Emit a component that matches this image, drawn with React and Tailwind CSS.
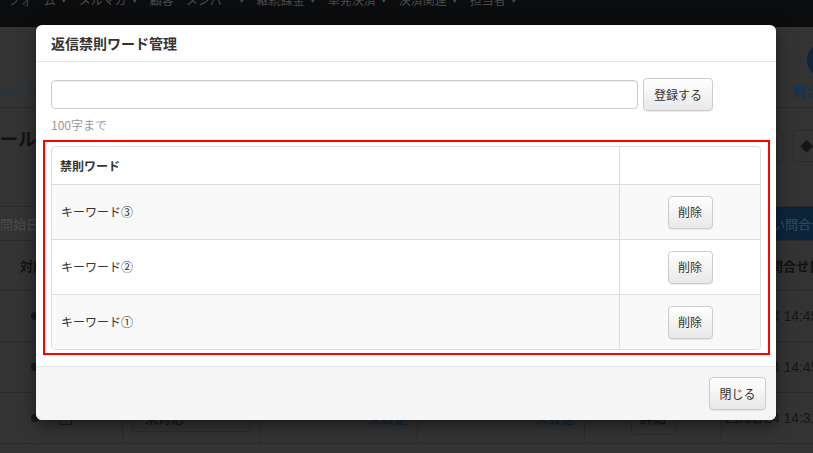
import React from "react";

const navItems = ["フォーム", "メルマガ", "顧客", "メンバー", "継続課金", "単発決済", "決済関連", "担当者"];
const keywords = ["キーワード③", "キーワード②", "キーワード①"];

// Gray bootstrap-ish button
function Btn({ children, className = "" }) {
  return (
    <button
      className={
        "h-[33px] rounded-[4px] border border-[#ccc] bg-linear-to-b from-white to-[#e8e8e8] text-[12px] text-[#333] shadow-[0_1px_1px_rgba(0,0,0,0.075)] " +
        className
      }
    >
      {children}
    </button>
  );
}

// The page sitting behind the backdrop, drawn already dimmed
function Background() {
  return (
    <div className="flex h-full flex-col text-[#121212]">
      <nav className="flex h-[27px] items-start gap-[12px] overflow-hidden bg-[#0b0c0e] pl-[8px] text-[12px] leading-none text-[#4a4a4a]">
        {navItems.map((n, i) => (
          <span key={n} className="-mt-[6px] flex items-center gap-[5px]">
            {n}
            {i !== 2 && <span className="text-[6px]">▼</span>}
          </span>
        ))}
      </nav>

      <div className="flex h-[81px] justify-between border-b border-[#2b2b2b]">
        <span className="mt-[52px] text-[13px] text-[#1b3650]">メール配信</span>
        <div className="flex w-[20px] flex-col overflow-hidden">
          <div className="ml-[14px] mt-[16px] h-[34px] w-[34px] shrink-0 rounded-full bg-[#0e253a]" />
          <span className="mt-[4px] whitespace-nowrap text-[13px] font-bold text-[#17324b]">問合せ</span>
        </div>
      </div>

      <div className="flex h-[98px] justify-between">
        <span className="mt-[17px] text-[18px] font-bold">ールフォーム管理</span>
        <div className="mt-[22px] flex gap-[10px]">
          <span className="flex h-[32px] w-[36px] items-center justify-end rounded-[4px] border border-[#2c2c2c] pr-[10px] text-[13px] text-[#151515]">理</span>
          <span className="flex h-[32px] w-[20px] items-center overflow-hidden rounded-l-[4px] border border-r-0 border-[#2c2c2c] pl-[6px] text-[13px] font-bold text-[#151515]">◆</span>
        </div>
      </div>

      <div className="flex h-[35px] items-center justify-between border-y border-[#2b2b2b]">
        <span className="text-[13px] text-[#4a4a4a]">開始日</span>
        <span className="flex h-[33px] w-[43px] items-center overflow-hidden whitespace-nowrap rounded-l-[4px] bg-[#0c243a] pl-[2px] text-[13px] text-[#3a4a5a]">い問合せ</span>
      </div>

      <div className="flex h-[50px] items-center justify-between border-b border-[#2b2b2b] text-[13px] font-bold">
        <span className="pl-[20px]">対応</span>
        <span className="w-[43px] overflow-hidden whitespace-nowrap">問合せ日時</span>
      </div>

      {[0, 1, 2].map((r) => (
        <div key={r} className="grid h-[51px] grid-cols-[123px_138px_157px_167px_137px_1fr] border-b border-[#2b2b2b] text-[13px]">
          <div className="flex items-center gap-[20px] border-r border-[#2b2b2b] pl-[31px]">
            <span className="h-[8px] w-[8px] rounded-full bg-[#1a1a1a]" />
            <span className="h-[13px] w-[13px] rounded-[2px] border border-[#1c1c1c]" />
          </div>
          <div className="flex items-center border-r border-[#2b2b2b] pl-[9px]">
            <span className="flex h-[28px] w-[119px] items-center rounded-[4px] border border-[#2c2c2c] pl-[12px]">未対応</span>
          </div>
          <div className="flex items-center justify-end border-r border-[#2b2b2b] pr-[10px] text-[#0f2538]">未設定</div>
          <div className="flex items-center justify-end border-r border-[#2b2b2b] pr-[10px] text-[#0f2538]">未設定</div>
          <div className="flex items-center justify-center border-r border-[#2b2b2b]">
            <span className="flex h-[34px] w-[45px] items-center justify-center rounded-[4px] border border-[#2c2c2c]">詳細</span>
          </div>
          <div className="flex items-center whitespace-nowrap pl-[3px] font-['Liberation_Sans',sans-serif] text-[14px] text-[#161616]">
            {r === 2 ? "21/02/24 14:31" : "21/02/24 14:45"}
          </div>
        </div>
      ))}
    </div>
  );
}

export default function App() {
  return (
    <div className="relative h-[453px] w-[813px] overflow-hidden bg-[#333] font-['Noto_Sans_CJK_JP',sans-serif] text-[12px] text-[#333]">
      <Background />

      {/* modal */}
      <div className="absolute inset-0">
        <div className="ml-[36px] mt-[25px] w-[740px] rounded-[6px] bg-white shadow-[0_5px_15px_rgba(0,0,0,0.5)]">
          <div className="flex h-[37px] items-center border-b border-[#e5e5e5] px-[15px]">
            <h4 className="text-[14px] font-bold text-[#333]">返信禁則ワード管理</h4>
          </div>

          <div className="px-[15px] pb-[11px] pt-[16px]">
            <div className="flex items-center gap-[5px]">
              <input className="h-[29px] w-[587px] rounded-[4px] border border-[#ccc] px-2 shadow-[inset_0_1px_1px_rgba(0,0,0,0.075)] outline-none" />
              <Btn className="w-[70px]">登録する</Btn>
            </div>
            <p className="mt-[5px] text-[12px] text-[#999]">100字まで</p>

            {/* red highlight */}
            <div className="-ml-[8px] -mr-[9px] mt-[6px] border-2 border-[#f00] pb-[3px] pl-[6px] pr-[7px] pt-[4px]">
              <table className="w-full border-separate border-spacing-0 overflow-hidden rounded-[4px] border border-[#ddd]">
                <thead>
                  <tr className="h-[37px]">
                    <th className="w-[568px] border-r border-[#ddd] pl-[8px] text-left text-[12px] font-bold">禁則ワード</th>
                    <th></th>
                  </tr>
                </thead>
                <tbody>
                  {keywords.map((k, i) => (
                    <tr key={k} className={"h-[55px] " + (i % 2 === 0 ? "bg-[#f9f9f9]" : "bg-white")}>
                      <td className="border-r border-t border-[#ddd] pl-[9px]">{k}</td>
                      <td className="border-t border-[#ddd] text-center">
                        <Btn className="w-[45px]">削除</Btn>
                      </td>
                    </tr>
                  ))}
                </tbody>
              </table>
            </div>
          </div>

          <div className="flex justify-end rounded-b-[6px] border-t border-[#e5e5e5] bg-[#f5f5f5] p-[10px]">
            <Btn className="w-[57px]">閉じる</Btn>
          </div>
        </div>
      </div>
    </div>
  );
}
